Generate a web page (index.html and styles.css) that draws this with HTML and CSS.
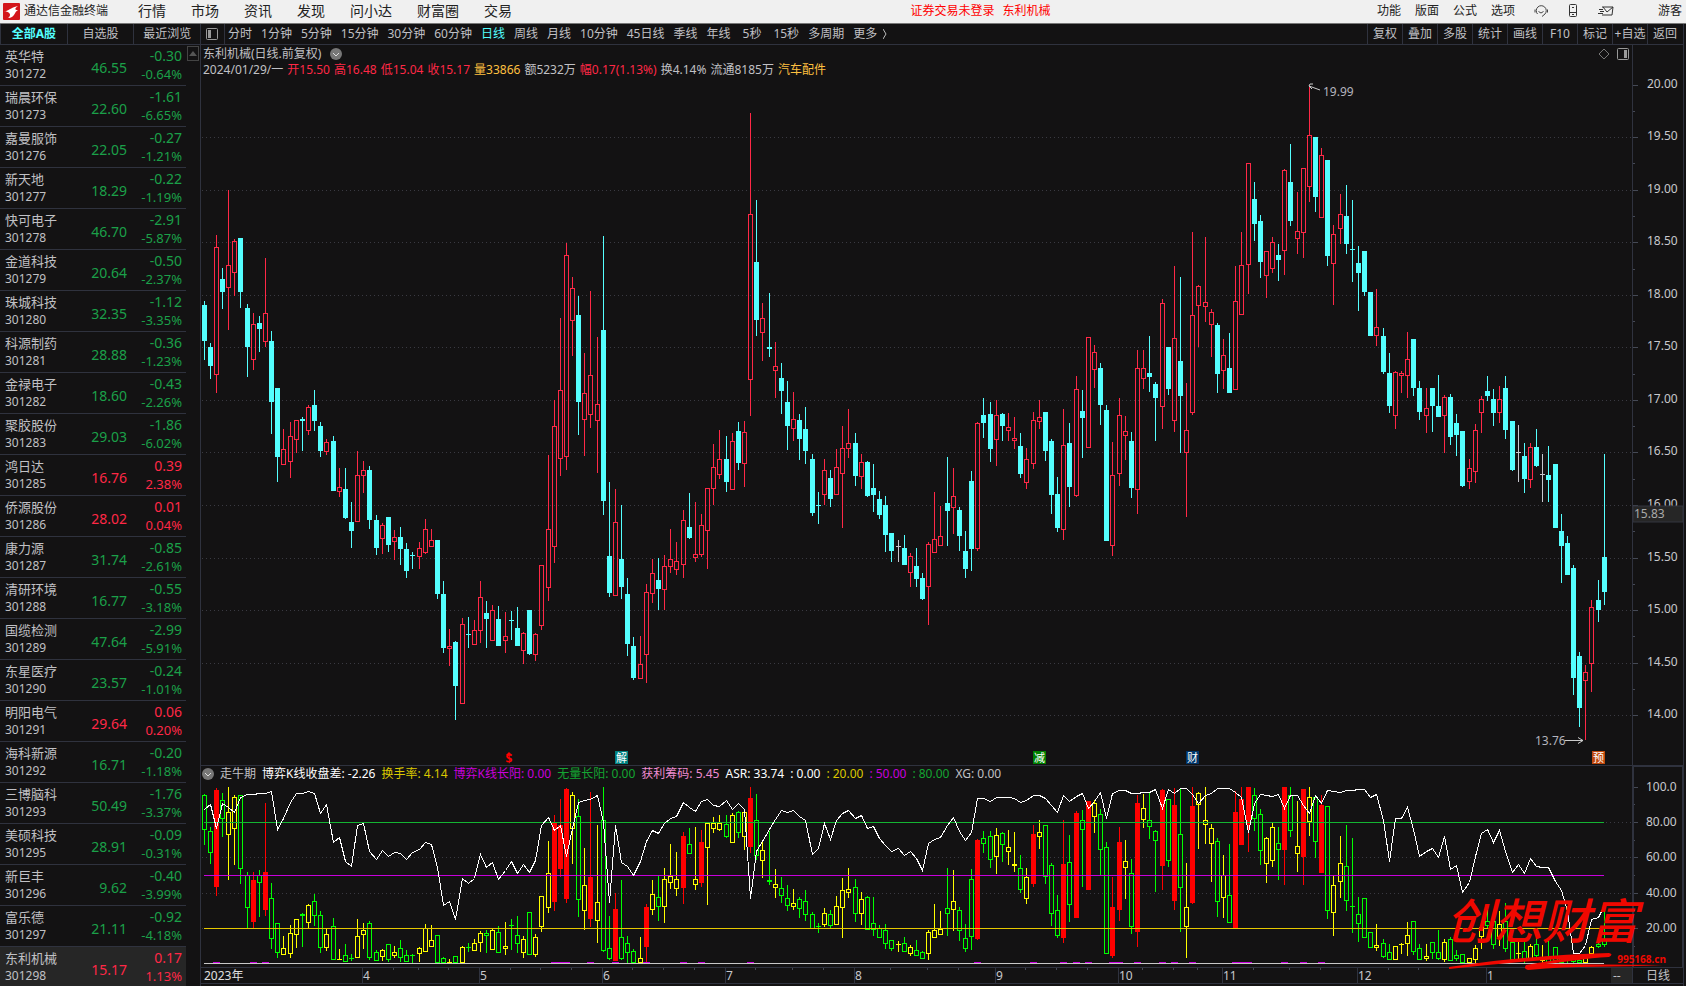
FILE: index.html
```html
<!DOCTYPE html>
<html lang="zh-CN">
<head>
    <meta charset="UTF-8">
    <meta name="viewport" content="width=device-width, initial-scale=1.0">
    <title>通达信金融终端</title>
    <link rel="stylesheet" href="styles.css">
</head>
<body>
    <header class="topbar">
        <svg class="logo" viewBox="0 0 17 17" width="17" height="17">
            <rect width="17" height="17" rx="1" fill="#d3161b"/>
            <path d="M1 8 C5 9 6 5 15 3 C12 5 11 7 15 7 C11 9 12 15 5 15 C9 12 7 9 1 8z" fill="#fff"/>
        </svg>
        <span class="app-name">通达信金融终端</span>
        <nav class="menu">
            <button>行情</button>
            <button>市场</button>
            <button>资讯</button>
            <button>发现</button>
            <button>问小达</button>
            <button>财富圈</button>
            <button>交易</button>
        </nav>
        <div class="login-state"><a href="#">证券交易未登录</a><a href="#">东利机械</a></div>
        <nav class="menu-right">
            <button>功能</button>
            <button>版面</button>
            <button>公式</button>
            <button>选项</button>
            <button class="service" aria-label="客服">
                <svg viewBox="0 0 14 14" width="14" height="14" fill="none" stroke="#444">
                    <path d="M3.500 10 A5 5 0 1 1 11 10 L8 12.500 M1 5.500 v3 M13.500 5.500 v3"/>
                    <path d="M4.500 7.500 Q7 10.500 9.500 7.500"/>
                </svg>
            </button>
            <button aria-label="手机">
                <svg viewBox="0 0 14 14" width="14" height="14" fill="none" stroke="#333">
                    <rect x="3.500" y="0.500" width="7" height="12" rx="1"/>
                    <path d="M3.500 8.500 h7 M6 10.500 h2 M6 3.500 h2"/>
                </svg>
            </button>
            <button aria-label="邮件">
                <svg viewBox="0 0 16 14" width="16" height="14" fill="none" stroke="#333">
                    <path d="M4 3 H15 L14 11 H4 M5 3 L9 8 L15 3 M1 5.500 h4 M2 7.500 h4 M0 9.500 h5"/>
                </svg>
            </button>
            <button class="guest">游客</button>
        </nav>
    </header>

    <div class="workspace">
        <aside class="sidebar">
            <div class="tabs">
                <button class="active">全部A股</button>
                <button>自选股</button>
                <button>最近浏览</button>
            </div>
            <div class="list-wrap">
                <table class="stocks">
                    <tbody id="stocks"></tbody>
                </table>
                <div class="scroll">
                    <button aria-label="向上滚动"><svg viewBox="0 0 8 5" width="8" height="5"><path d="M0 5 L4 0 L8 5z" fill="#555"/></svg></button>
                </div>
            </div>
        </aside>

        <main class="main">
            <div class="toolbar">
                <button class="panel-toggle" aria-label="侧栏">
                    <svg viewBox="0 0 12 12" width="12" height="12"><rect x="0.500" y="0.500" width="11" height="11" rx="1" fill="none" stroke="#999"/><rect x="2" y="2" width="3" height="8" fill="#999"/></svg>
                </button>
                <div class="periods">
                    <button>分时</button>
                    <button>1分钟</button>
                    <button>5分钟</button>
                    <button>15分钟</button>
                    <button>30分钟</button>
                    <button>60分钟</button>
                    <button class="active">日线</button>
                    <button>周线</button>
                    <button>月线</button>
                    <button>10分钟</button>
                    <button>45日线</button>
                    <button>季线</button>
                    <button>年线</button>
                    <button class="sec">5秒</button>
                    <button class="sec">15秒</button>
                    <button>多周期</button>
                    <button>更多 <svg viewBox="0 0 4 10" width="4" height="10" fill="none" stroke="#bbb"><path d="M0 0 L3 5 L0 10"/></svg></button>
                </div>
                <div class="tools">
                    <button>复权</button>
                    <button>叠加</button>
                    <button>多股</button>
                    <button>统计</button>
                    <button>画线</button>
                    <button>F10</button>
                    <button>标记</button>
                    <button>+自选</button>
                    <button>返回</button>
                </div>
            </div>

            <section class="panel price-panel">
                <div class="plot">
                    <svg id="price"></svg>
                    <div class="info">
                        <div class="info-title">
                            <span>东利机械(日线.前复权)</span>
                            <svg viewBox="0 0 12 12" width="12" height="12"><circle cx="6" cy="6" r="6" fill="#777"/><path d="M3 5 L6 8 L9 5" fill="none" stroke="#ddd"/></svg>
                            <span class="corner">
                                <svg viewBox="0 0 12 12" width="12" height="12" fill="none" stroke="#777"><path d="M6 1 L11 6 L6 11 L1 6z"/></svg>
                                <svg viewBox="0 0 12 12" width="12" height="12"><rect x="0.500" y="0.500" width="11" height="11" rx="1" fill="none" stroke="#999"/><rect x="7" y="2" width="3" height="8" fill="#999"/></svg>
                            </span>
                        </div>
                        <div class="quote">
                            <span>2024/01/29/一</span>
                            <span class="up">开15.50</span>
                            <span class="up">高16.48</span>
                            <span class="up">低15.04</span>
                            <span class="up">收15.17</span>
                            <span class="amber">量33866</span>
                            <span>额5232万</span>
                            <span class="up">幅0.17(1.13%)</span>
                            <span>换4.14%</span>
                            <span>流通8185万</span>
                            <span class="amber">汽车配件</span>
                        </div>
                    </div>
                </div>
                <svg class="axis" id="priceAxis"></svg>
            </section>

            <section class="panel ind-panel">
                <div class="plot">
                    <svg id="ind"></svg>
                    <div class="ind-head">
                        <svg viewBox="0 0 12 12" width="12" height="12"><circle cx="6" cy="6" r="6" fill="#777"/><path d="M3 5 L6 8 L9 5" fill="none" stroke="#ddd"/></svg>
                        <span>走牛期</span>
                        <span class="white">博弈K线收盘差: -2.26</span>
                        <span class="yellow">换手率: 4.14</span>
                        <span class="purple">博弈K线长阳: 0.00</span>
                        <span class="green">无量长阳: 0.00</span>
                        <span class="pink">获利筹码: 5.45</span>
                        <span class="white">ASR: 33.74</span>
                        <span class="white">: 0.00</span>
                        <span class="yellow">: 20.00</span>
                        <span class="purple">: 50.00</span>
                        <span class="green">: 80.00</span>
                        <span>XG: 0.00</span>
                    </div>
                </div>
                <svg class="axis" id="indAxis"></svg>
            </section>

            <div class="time-row">
                <svg id="time"></svg>
                <span class="dash">--</span>
                <span class="unit">日线</span>
            </div>
            <div class="bottom-strip"></div>
        </main>
        <div class="edge"></div>
    </div>

    <div class="watermark">
        <span class="wm-name">创想财富</span>
        <svg viewBox="0 0 220 20" width="220" height="20">
            <path d="M3 15 C50 8 110 2 163 1 Q168 2 163 5 C140 6 120 10 100 12 L217 13 C170 16 130 13 82 18 Q77 17 80 13 L115 7 C80 9 40 13 3 17z" fill="#f00800"/>
        </svg>
        <span class="wm-site">995168.cn</span>
    </div>

    <script src="chart.js"></script>
</body>
</html>
```
FILE: styles.css
```css
* {
    box-sizing: border-box;
}
body {
    margin: 0;
    height: 100vh;
    display: flex;
    flex-direction: column;
    overflow: hidden;
    background: #131213;
    color: #c0c0c4;
    font-family: "Noto Sans", "Noto Sans CJK SC", sans-serif;
    font-size: 12px;
    line-height: 16px;
}
button {
    padding: 0;
    border: none;
    background: none;
    color: inherit;
    font: inherit;
    white-space: nowrap;
    cursor: pointer;
}
svg {
    display: block;
}

/* top bar */
.topbar {
    position: relative;
    display: flex;
    align-items: center;
    flex: none;
    height: 24px;
    padding: 0 4px 1px 3px;
    background: #f0f0f0;
    border-bottom: 1px solid #777;
    color: #222;
}
.app-name {
    margin: 0 30px 0 4px;
}
.menu {
    display: flex;
    gap: 25px;
    font-size: 14px;
}
.login-state {
    position: absolute;
    left: 54%;
    display: flex;
    gap: 8px;
}
.login-state a {
    color: #f00;
    text-decoration: none;
}
.menu-right {
    display: flex;
    align-items: center;
    gap: 14px;
    margin-left: auto;
}
.menu-right svg {
    margin: 0 2px;
}
.menu-right .service {
    margin-left: 3px;
}
.menu-right .guest {
    margin-left: 28px;
}

.workspace {
    display: flex;
    flex: 1;
    min-height: 0;
}

/* stock list */
.sidebar {
    flex: none;
    width: 201px;
    border-right: 1px solid #2f323e;
    overflow: hidden;
}
.tabs {
    display: flex;
    height: 21px;
    border-bottom: 1px solid #2f323e;
}
.tabs button {
    flex: 1;
    border-left: 1px solid #2f323e;
}
.tabs .active {
    color: #54ffff;
    font-weight: bold;
}
.list-wrap {
    display: flex;
}
.stocks {
    width: 186px;
    border-spacing: 0;
}
.stocks td {
    height: 41px;
    padding: 2px 0 0;
    border-bottom: 1px solid #2f323e;
    line-height: 18px;
    vertical-align: top;
}
.stocks .name {
    width: 72px;
    padding-left: 5px;
    font-size: 12px;
}
.stocks .name b {
    display: block;
    font-size: 13px;
    font-weight: normal;
}
.stocks .last {
    padding: 6px 0 0;
    font-size: 14px;
    text-align: right;
    vertical-align: middle;
}
.stocks .chg {
    width: 59px;
    padding-right: 4px;
    font-size: 13px;
    text-align: right;
}
.stocks .chg b {
    display: block;
    font-size: 14px;
    font-weight: normal;
}
.stocks .selected {
    background: #262626;
}
.down {
    color: #1ba049;
}
.up {
    color: #ff2846;
}
.scroll {
    padding: 1px;
}
.scroll button {
    display: flex;
    align-items: center;
    justify-content: center;
    width: 12px;
    height: 15px;
    border: 1px solid #444;
}

/* period toolbar */
.main {
    display: flex;
    flex-direction: column;
    flex: 1;
    min-width: 0;
}
.toolbar {
    display: flex;
    flex: none;
    height: 21px;
    border-bottom: 1px solid #2f323e;
}
.panel-toggle {
    width: 24px;
    padding-left: 5px;
    border-right: 1px solid #2f323e;
}
.periods {
    display: flex;
    gap: 9px;
    margin-left: 3px;
}
.periods .active {
    color: #54ffff;
}
.periods .sec {
    margin-left: 3px;
}
.periods svg {
    display: inline-block;
    margin-left: 3px;
    vertical-align: -1px;
}
.tools {
    display: flex;
    margin: 0 1px 0 auto;
}
.tools button {
    width: 35px;
    border-left: 1px solid #2f323e;
}

/* charts */
.panel {
    display: flex;
    min-height: 0;
}
.price-panel {
    flex: 720 1 0;
    border-bottom: 1px solid #2f323e;
}
.ind-panel {
    flex: 201 1 0;
    border-bottom: 1px solid #2f323e;
}
.plot {
    display: grid;
    flex: 1;
    min-width: 0;
    min-height: 0;
}
.plot > * {
    grid-area: 1 / 1;
}
.plot > svg {
    width: 100%;
    height: 100%;
    min-height: 0;
}
.axis {
    flex: none;
    width: 51px;
    height: 100%;
    border-left: 1px solid #2f323e;
}
.ind-panel .axis {
    border: 1px solid #2f323e;
    border-left-width: 2px;
    border-bottom: none;
}
.panel text {
    font-size: 12px;
}
.info {
    padding: 1px 2px;
}
.info-title {
    display: flex;
    align-items: center;
    gap: 9px;
}
.corner {
    display: flex;
    gap: 7px;
    margin: 0 1px 0 auto;
}
.quote {
    display: flex;
    gap: 4px;
    align-self: start;
}
.ind-head {
    display: flex;
    align-items: center;
    gap: 6px;
    height: 16px;
    padding-left: 1px;
    white-space: nowrap;
}
.amber {
    color: #ffc040;
}
.white {
    color: #fff;
}
.yellow {
    color: #dcc800;
}
.purple {
    color: #c800dc;
}
.green {
    color: #14a532;
}
.pink {
    color: #f08cd2;
}

.time-row {
    display: flex;
    flex: none;
    height: 16px;
    border-bottom: 1px solid #2f323e;
    line-height: 15px;
}
.time-row svg {
    flex: 1;
    min-width: 0;
    height: 15px;
    font-size: 12px;
}
.dash {
    width: 21px;
    padding-left: 2px;
    background: #262626;
}
.unit {
    width: 51px;
    border-left: 1px solid #2f323e;
    text-align: center;
}
.bottom-strip {
    flex: none;
    height: 2px;
}
.edge {
    flex: none;
    width: 3px;
    border-left: 1px solid #2f323e;
}

/* site mark over the charts */
.watermark {
    position: absolute;
    right: 18px;
    bottom: 14px;
    width: 222px;
    color: #f00800;
}
.wm-name {
    display: block;
    margin-bottom: 10px;
    font-family: "Noto Sans CJK SC", sans-serif;
    font-size: 48px;
    font-style: italic;
    font-weight: 500;
    line-height: 48px;
    white-space: nowrap;
}
.wm-site {
    position: absolute;
    right: 2px;
    bottom: 7px;
    font-size: 10px;
    font-weight: bold;
    line-height: 12px;
}
```
FILE: chart.js
```js
const SVG_LINE = '#2f323e';

const stocks = [
    ['英华特', '301272', '46.55', '-0.30', '-0.64%'],
    ['瑞晨环保', '301273', '22.60', '-1.61', '-6.65%'],
    ['嘉曼服饰', '301276', '22.05', '-0.27', '-1.21%'],
    ['新天地', '301277', '18.29', '-0.22', '-1.19%'],
    ['快可电子', '301278', '46.70', '-2.91', '-5.87%'],
    ['金道科技', '301279', '20.64', '-0.50', '-2.37%'],
    ['珠城科技', '301280', '32.35', '-1.12', '-3.35%'],
    ['科源制药', '301281', '28.88', '-0.36', '-1.23%'],
    ['金禄电子', '301282', '18.60', '-0.43', '-2.26%'],
    ['聚胶股份', '301283', '29.03', '-1.86', '-6.02%'],
    ['鸿日达', '301285', '16.76', '0.39', '2.38%'],
    ['侨源股份', '301286', '28.02', '0.01', '0.04%'],
    ['康力源', '301287', '31.74', '-0.85', '-2.61%'],
    ['清研环境', '301288', '16.77', '-0.55', '-3.18%'],
    ['国缆检测', '301289', '47.64', '-2.99', '-5.91%'],
    ['东星医疗', '301290', '23.57', '-0.24', '-1.01%'],
    ['明阳电气', '301291', '29.64', '0.06', '0.20%'],
    ['海科新源', '301292', '16.71', '-0.20', '-1.18%'],
    ['三博脑科', '301293', '50.49', '-1.76', '-3.37%'],
    ['美硕科技', '301295', '28.91', '-0.09', '-0.31%'],
    ['新巨丰', '301296', '9.62', '-0.40', '-3.99%'],
    ['富乐德', '301297', '21.11', '-0.92', '-4.18%'],
    ['东利机械', '301298', '15.17', '0.17', '1.13%']
];

// daily bars: colour, high, body top, body bottom, low
// 250 units per yuan, counted down from 19.85
const bars = `
c478,487,573,618 c577,587,632,663 r321,350,653,696 c399,425,456,497 r213,392,446,546 r330,335,412,466 c328,328,456,494
c485,494,587,658 r506,533,618,641 c513,530,544,599 r375,506,575,587 c549,573,717,794 c684,684,848,908 r782,829,866,866
r765,799,861,898 r760,760,807,839 c753,758,763,834 r725,730,786,796 c689,725,763,786 c765,774,834,848 r805,813,836,843
c798,810,929,929 r874,919,931,943 c874,924,993,995 c955,1003,1024,1064 r834,891,1002,1002 r858,879,893,934 c870,879,998,1019
c986,998,1064,1081 r1005,1010,1043,1079 c991,991,1057,1074 r1021,1038,1050,1093 c1014,1038,1067,1105 c1052,1067,1119,1136 c1074,1081,1082,1114
r1050,1064,1085,1114 r995,1019,1076,1079 r1019,1045,1062,1062 c1045,1045,1174,1186 c1143,1174,1302,1314 r1257,1297,1304,1345 c1285,1288,1392,1473
r1231,1245,1435,1435 c1228,1269,1270,1302 r1235,1259,1295,1295 r1143,1181,1262,1290 c1190,1219,1233,1302 r1200,1212,1285,1285 c1202,1233,1297,1297
r1216,1273,1285,1314 c1214,1235,1238,1283 c1205,1254,1297,1297 r1264,1266,1309,1340 c1212,1212,1316,1319 r1266,1269,1319,1333 r1105,1105,1250,1259
r843,1019,1159,1190 r713,774,1062,1100 r518,689,853,893 r340,368,848,879 r421,447,525,608 c466,511,717,796 r601,696,760,846
r454,653,748,779 r563,722,763,886 c323,546,953,986 c908,1083,1171,1181 r924,1003,1178,1178 c962,1090,1157,1186 c1136,1174,1292,1321
c1276,1297,1373,1378 r1273,1340,1375,1375 r1150,1169,1319,1385 r1090,1124,1173,1195 c1088,1140,1162,1212 r1081,1107,1164,1212 r1019,1090,1109,1124
r1050,1095,1116,1128 r974,998,1104,1136 c934,1014,1041,1043 r955,1079,1088,1098 r984,1010,1081,1086 r922,922,1024,1114 r817,872,924,962
r784,853,891,900 c798,853,908,931 r791,810,927,927 c765,786,862,879 r763,789,864,919 r31,271,665,751 c238,385,523,561
r482,518,554,620 c459,587,592,611 r575,632,644,708 c625,660,691,746 c668,717,774,832 r694,758,781,810 c746,760,805,855
c729,782,834,865 c841,853,981,988 c931,961,962,1007 r853,879,938,962 c879,898,948,967 r829,872,938,938 r774,827,888,1017
r734,815,829,851 c791,815,893,917 r841,860,896,924 c858,860,941,943 c865,922,938,979 c929,948,986,995 c941,962,1033,1074
c1029,1029,1071,1098 w1045,1060,1061,1098 c1033,1064,1105,1105 r1076,1083,1124,1157 c1064,1107,1138,1157 c1124,1136,1186,1188 r1050,1055,1157,1247
r931,1043,1076,1076 r965,1036,1060,1060 c848,957,976,1060 r874,941,969,1031 c967,974,1036,1071 c1024,1071,1114,1136 c881,905,1067,1119
r765,767,1067,1071 c708,748,767,803 c717,746,829,860 r713,748,808,870 c743,746,774,810 r744,777,786,810 r753,803,810,829
c791,822,889,898 r827,853,910,924 r741,760,865,877 r713,753,766,782 c741,741,834,858 c805,810,938,984 c896,936,1017,1026
r734,820,1022,1045 c767,815,919,967 r656,687,941,943 c689,739,755,851 r563,563,827,827 r582,599,641,684 c625,637,725,772
c725,736,1048,1048 r813,891,1060,1083 r708,748,889,917 r751,786,798,855 c789,810,922,946 r594,637,927,984 r594,637,663,687
c561,649,658,694 c670,675,708,810 r473,482,729,782 c587,587,687,701 r394,566,763,789 c421,620,703,839 r672,784,839,991
r314,511,744,748 r440,442,489,587 r325,480,492,527 r497,504,535,611 c530,535,651,696 r568,606,644,687 c554,637,696,696
r394,478,689,689 r314,392,511,511 r150,150,392,461 c195,235,295,335 c273,287,385,423 r359,359,418,470 r325,337,402,411
c342,368,380,430 r164,166,359,416 c105,195,287,299 r219,311,330,366 r162,162,316,375 r-33,83,207,242 c88,88,230,266
r114,131,280,280 c143,143,371,394 r297,318,390,487 r223,271,306,342 c202,276,342,366 c238,354,355,432 c347,387,411,501
c359,359,456,466 c456,456,561,561 r449,539,561,584 c542,561,646,651 c601,649,727,744 r644,646,751,782 r644,649,656,696
r551,615,656,708 c568,568,684,703 c668,684,741,760 r684,732,751,791 c684,684,727,789 c653,727,753,753 r701,706,751,839
c698,706,801,820 c746,767,796,846 c786,786,917,919 r853,874,908,924 r770,784,884,910 r703,710,744,791 c656,691,703,715
c687,710,744,774 r679,710,744,767 c656,684,784,805 c763,763,879,881 w772,837,838,908 c815,846,900,934 r815,824,903,922
c782,824,870,872 w841,888,889,955 c822,891,903,955 c865,865,1017,1017 c984,1024,1060,1147 c1036,1052,1128,1128 c1105,1112,1373,1414
c1311,1321,1444,1490 r1342,1359,1381,1520 r1188,1205,1340,1406 c1140,1188,1212,1240 c841,1086,1169,1200`;

// indicator bars, 529 units for 0..100
const indBars = `
g147,150,257,300 g247,259,326,357 R131,135,426,453 g144,166,224,278 y128,202,272,408 y153,156,254,360 g150,150,372,417
g381,392,491,549 R381,408,531,549 g375,390,416,516 R174,381,495,513 g414,460,584,612 g534,534,626,639 y573,610,632,632
y540,565,629,639 y522,522,570,609 g504,508,513,606 y477,481,536,549 g447,468,513,543 g499,510,611,624 y549,567,611,620
g519,543,647,647 y612,642,647,647 g597,630,651,651 g627,639,644,648 y522,573,641,641 y534,555,570,612 g528,534,641,645
g615,621,650,650 y612,616,638,650 g597,597,647,651 y603,621,635,641 g585,609,641,653 g615,630,653,653 g627,630,635,655
y606,610,629,651 y537,549,623,623 y540,586,608,608 g571,571,655,655 g636,640,655,655 y642,651,655,655 g633,633,654,655
y603,606,655,655 g594,606,608,621 y582,595,620,620 y558,565,596,621 g555,564,575,624 y552,556,617,617 g543,562,626,626
y531,603,614,630 g522,540,545,615 g513,570,599,626 y573,582,626,639 g501,501,632,632 y567,576,632,636 y453,453,546,561
y288,385,491,504 R210,231,471,498 R162,240,372,396 R129,132,462,474 y141,153,254,357 g162,213,467,516 y309,423,500,555
R141,396,522,546 y240,472,530,594 g126,228,620,621 g513,610,644,645 R444,492,648,648 g405,576,644,645 g573,594,626,655
g612,618,655,655 y576,639,655,655 R477,486,606,651 y408,447,497,510 g393,456,488,528 y369,402,488,534 y297,394,416,434
y321,402,434,453 R261,273,429,477 g249,297,329,329 y246,402,420,438 R255,291,414,426 y234,234,311,480 y216,234,252,264
y210,234,255,258 g210,237,276,279 y204,210,296,296 g198,202,266,279 y201,201,276,315 R126,159,306,324 g147,228,335,345
y285,316,350,399 g258,408,413,423 y372,418,429,459 g396,430,455,474 g420,459,483,498 y432,474,486,495 g456,463,494,519
g435,468,512,528 g501,508,554,554 g534,543,545,564 y489,504,540,546 g495,508,545,549 y453,484,542,542 y399,436,491,579
y369,432,444,459 g402,427,507,531 y441,462,507,540 g453,457,557,557 g456,534,555,573 g540,550,581,581 g537,555,597,612
g585,585,612,618 y588,597,599,621 g576,595,623,623 y600,606,627,633 g585,615,633,633 g618,621,642,642 y555,562,627,645
y477,555,581,581 y498,552,570,570 g369,489,509,573 y378,468,497,558 g486,495,560,588 g537,579,614,621 g372,402,578,615
R282,286,582,585 g258,279,299,324 g258,273,347,369 y249,271,338,387 g261,265,302,351 y255,307,323,360 y261,357,365,381
g330,370,437,444 y369,396,462,477 R243,267,417,426 y228,261,278,312 g243,243,396,417 g354,360,507,543 g450,496,575,579
R225,357,579,594 g270,351,482,531 R198,204,519,519 g195,228,255,426 R168,168,435,435 y165,174,218,264 g192,207,317,390
g291,307,629,629 R396,486,633,639 R246,291,495,528 y285,348,371,462 g342,384,546,567 R150,174,561,606 y147,189,228,249
g144,228,248,282 g255,258,290,441 R132,135,363,435 g162,162,350,366 R129,180,468,495 g129,267,429,561 y354,486,546,639
R126,183,474,477 y141,144,180,312 y126,228,243,297 y237,250,299,411 g279,288,473,516 y330,391,461,519 g297,450,536,536
R138,201,549,549 R126,162,300,300 R126,126,243,321 g129,150,224,258 g192,207,320,360 y276,279,359,414 y234,247,350,366
g246,294,317,405 R126,126,315,423 g126,150,260,276 y168,303,329,381 R132,132,336,423 y126,156,233,273 g150,156,293,339
R150,180,384,384 g183,183,500,522 y393,423,506,573 y273,354,413,459 g240,363,470,498 g279,483,488,564 g456,507,539,591
g459,459,581,581 g561,561,611,611 y537,600,611,618 g582,594,638,639 g597,621,647,647 y603,603,647,647 y594,597,602,627
y531,570,599,633 g528,528,623,630 g597,610,647,647 y597,633,644,648 g591,591,626,642 g555,622,644,645 y582,591,647,651
g576,583,650,650 g615,630,644,650 g627,627,655,655 y639,639,654,654 y600,609,647,654 y530,546,578,612 g495,528,543,552
g520,528,600,612 y498,537,578,603 g474,530,614,621 g585,591,647,650 y588,624,626,650 g590,620,645,655 y597,603,647,650
g573,597,633,640 y600,645,650,655 g590,640,655,655 g606,606,650,655 g636,640,655,655 g630,640,650,655 g635,642,652,655
g640,645,655,655 y635,640,655,655 y603,606,627,627 g594,599,608,609 g480,585,600,606`;

const asr = [
    192, 178, 250, 176, 186, 203, 158, 149, 149, 146, 146, 139, 253, 220, 172, 146, 145, 139, 146, 206,
    178, 291, 278, 349, 363, 242, 234, 318, 343, 316, 333, 321, 325, 343, 323, 312, 292, 298, 368, 481,
    470, 523, 400, 415, 400, 328, 366, 353, 404, 376, 350, 386, 358, 382, 347, 243, 217, 256, 243, 333,
    250, 171, 167, 163, 153, 232, 473, 243, 353, 364, 393, 350, 288, 256, 264, 234, 221, 215, 172, 186,
    199, 168, 163, 180, 184, 167, 192, 176, 193, 460, 318, 288, 252, 222, 196, 202, 197, 213, 225, 328,
    310, 234, 283, 225, 205, 196, 220, 211, 250, 244, 281, 300, 320, 310, 331, 319, 340, 376, 296, 284,
    277, 243, 217, 258, 286, 262, 159, 160, 168, 157, 157, 157, 160, 172, 166, 151, 151, 159, 181, 202,
    153, 169, 154, 145, 190, 169, 142, 220, 145, 136, 136, 144, 146, 142, 141, 133, 189, 133, 145, 130,
    129, 149, 174, 153, 145, 129, 129, 129, 141, 158, 262, 174, 148, 150, 154, 149, 190, 151, 151, 180,
    206, 152, 175, 136, 138, 142, 137, 136, 133, 133, 157, 148, 228, 350, 220, 219, 187, 253, 334, 320,
    310, 337, 273, 373, 362, 442, 413, 333, 266, 253, 291, 256, 319, 382, 358, 385, 340, 364, 367, 368,
    410, 436, 500, 626, 626, 600, 523, 516, 480
];

const months = [[26, '4'], [45, '5'], [65, '6'], [85, '7'], [106, '8'], [129, '9'], [149, '10'], [166, '11'], [188, '12'], [209, '1']];
const weeks = [31, 35, 40, 50, 55, 60, 70, 75, 80, 90, 96, 101, 112, 118, 123, 134, 139, 144, 153, 158, 162, 171, 177, 182, 193, 198];
const marks = [[68, '解', '#008080'], [136, '减', '#008000'], [161, '财', '#003468'], [227, '预', '#c0480c']];
const colors = { c: '#54ffff', r: '#ff2846', w: '#c8c8d0', g: '#00ff00', y: '#ffff00', R: '#ff0000' };

function parse(text) {
    return text.trim().split(/\s+/).map(s => [s[0], ...s.slice(1).split(',').map(Number)]);
}

function box(x, y, w, h) {
    return `M${x} ${y}h${w}v${h}h${-w}z`;
}

function barX(i, width) {
    return 3 + Math.floor(i * (width - 31) / 228 + 0.155);
}

function candles(list, width, toY) {
    const paths = {};
    list.forEach(([kind, high, top, bottom, low], i) => {
        const x = barX(i, width);
        const h = toY(high), t = toY(top), l = toY(low);
        const b = Math.max(toY(bottom), t + 1);
        let d = '';
        if (t > h) d += box(x, h, 1, t - h);
        if (l > b) d += box(x, b, 1, l - b);
        d += box(x - 2, t, 5, b - t);
        if ('rgy'.includes(kind) && b - t > 2) d += box(x - 1, t + 1, 3, b - t - 2);
        paths[kind] = (paths[kind] || '') + d;
    });
    return Object.entries(paths)
        .map(([k, d]) => `<path d="${d}" fill="${colors[k]}" fill-rule="evenodd" shape-rendering="crispEdges"/>`)
        .join('');
}

function hline(x1, x2, y, color, dash) {
    return `<line x1="${x1}" x2="${x2}" y1="${y + 0.5}" y2="${y + 0.5}" stroke="${color}" ${dash ? 'stroke-dasharray="1 3"' : ''}/>`;
}

function label(x, y, text, color = '#c8c8cc', extra = '') {
    return `<text x="${x}" y="${y}" fill="${color}" ${extra}>${text}</text>`;
}

function drawPrice() {
    const svg = document.getElementById('price');
    const axis = document.getElementById('priceAxis');
    const { width, height } = svg.getBoundingClientRect();
    const toY = v => Math.round((v + 131) / 1711 * height);
    const priceY = p => toY((19.852 - p) * 249.8);
    let out = '', ax = '';

    for (let p = 20; p >= 14; p -= 0.5) {
        const y = priceY(p);
        if (p < 20) out += hline(1, width, y, '#3a3a42', true);
        ax += hline(0, 5, y, '#454955') + label(14, y + 3, p.toFixed(2));
        if (p > 14) ax += hline(0, 2, priceY(p - 0.25), '#454955');
    }
    out += candles(parse(bars), width, toY);

    // highest and lowest price
    const hx = barX(180, width), hy = toY(-33);
    out += `<path d="M${hx + 11} ${hy + 4} L${hx} ${hy} m4 -2 h-3 l-1 2 l3 3" fill="none" stroke="#ccc"/>`;
    out += label(hx + 14, hy + 10, '19.99', '#b4b4be');
    const lx = barX(225, width), ly = toY(1520);
    out += `<path d="M${lx - 20} ${ly + 0.5} h18 m-5 -3 l5 3 l-5 3" fill="none" stroke="#ccc"/>`;
    out += label(lx - 50, ly + 5, '13.76', '#b4b4be');

    const sx = barX(50, width) - 2;
    out += label(sx, height - 2, '$', '#f00', 'text-anchor="middle" font-weight="bold"');
    out += `<path d="M${sx - 3} ${height - 10} l3 -3 l3 3z" fill="#f00"/>`;
    marks.forEach(([i, text, color]) => {
        const x = barX(i, width) - 6;
        out += `<rect x="${x}" y="${height - 14}" width="13" height="13" fill="${color}"/>`;
        out += label(x + 1, height - 3, text, '#fff', 'style="font-size:11px"');
    });

    // cursor price
    const cy = toY(984);
    ax += `<rect x="0" y="${cy - 8}" width="50" height="16" fill="#262626" stroke="#33353f"/>` + label(1, cy + 4, '15.83', '#aaa');
    svg.innerHTML = out;
    axis.innerHTML = ax;
}

function drawInd() {
    const svg = document.getElementById('ind');
    const axis = document.getElementById('indAxis');
    const { width, height } = svg.getBoundingClientRect();
    const toY = v => Math.floor((v - 63) / 603 * height);
    const valY = n => toY(656 - n * 5.29);
    const list = parse(indBars);
    const end = barX(228, width);
    let out = '', ax = '';

    [80, 60, 40, 20].forEach(n => out += hline(1, width, valY(n), '#3a3a42', true));
    out += candles(list, width, toY);
    out += hline(3, end, valY(80), '#14b432');
    out += hline(3, end, valY(50), '#c800dc');
    out += hline(3, end, valY(20), '#e6c800');
    out += hline(3, end, valY(0), '#c8c8c8');
    list.forEach(([kind], i) => {
        if (kind === 'R') out += hline(barX(i, width) - 3, barX(i, width) + 4, valY(0) - 1, '#c800dc');
    });
    const points = asr.map((v, i) => `${barX(i, width) + 0.5},${toY(v) + 0.5}`).join(' ');
    out += `<polyline points="${points}" fill="none" stroke="#fff" shape-rendering="crispEdges"/>`;

    [100, 80, 60, 40, 20].forEach(n => {
        const y = valY(n) - 1;
        ax += hline(0, 4, y, '#454955') + hline(0, 1, valY(n - 10) - 1, '#454955');
        ax += label(12, y + 4, n === 100 ? '100.0' : n.toFixed(2));
    });
    svg.innerHTML = out;
    axis.innerHTML = ax;
}

function drawTime() {
    const svg = document.getElementById('time');
    const width = document.getElementById('price').getBoundingClientRect().width;
    let out = label(3, 12, '2023年', '#e0e0e0');
    months.forEach(([i, text]) => {
        const x = barX(i, width) - 1;
        out += `<path d="M${x + 0.5} 0v15" stroke="${SVG_LINE}"/>` + label(x + 1, 12, text);
    });
    weeks.forEach(i => out += `<path d="M${barX(i, width) - 0.5} 0v2" stroke="#454955"/>`);
    svg.innerHTML = out;
}

function draw() {
    drawPrice();
    drawInd();
    drawTime();
}

document.getElementById('stocks').innerHTML = stocks.map(([name, code, last, chg, pct]) => {
    const tone = chg[0] === '-' ? 'down' : 'up';
    const row = code === '301298' ? ' class="selected"' : '';
    return `<tr${row}><td class="name"><b>${name}</b>${code}</td><td class="last ${tone}">${last}</td><td class="chg ${tone}"><b>${chg}</b>${pct}</td></tr>`;
}).join('');

draw();
window.addEventListener('resize', draw);
```
